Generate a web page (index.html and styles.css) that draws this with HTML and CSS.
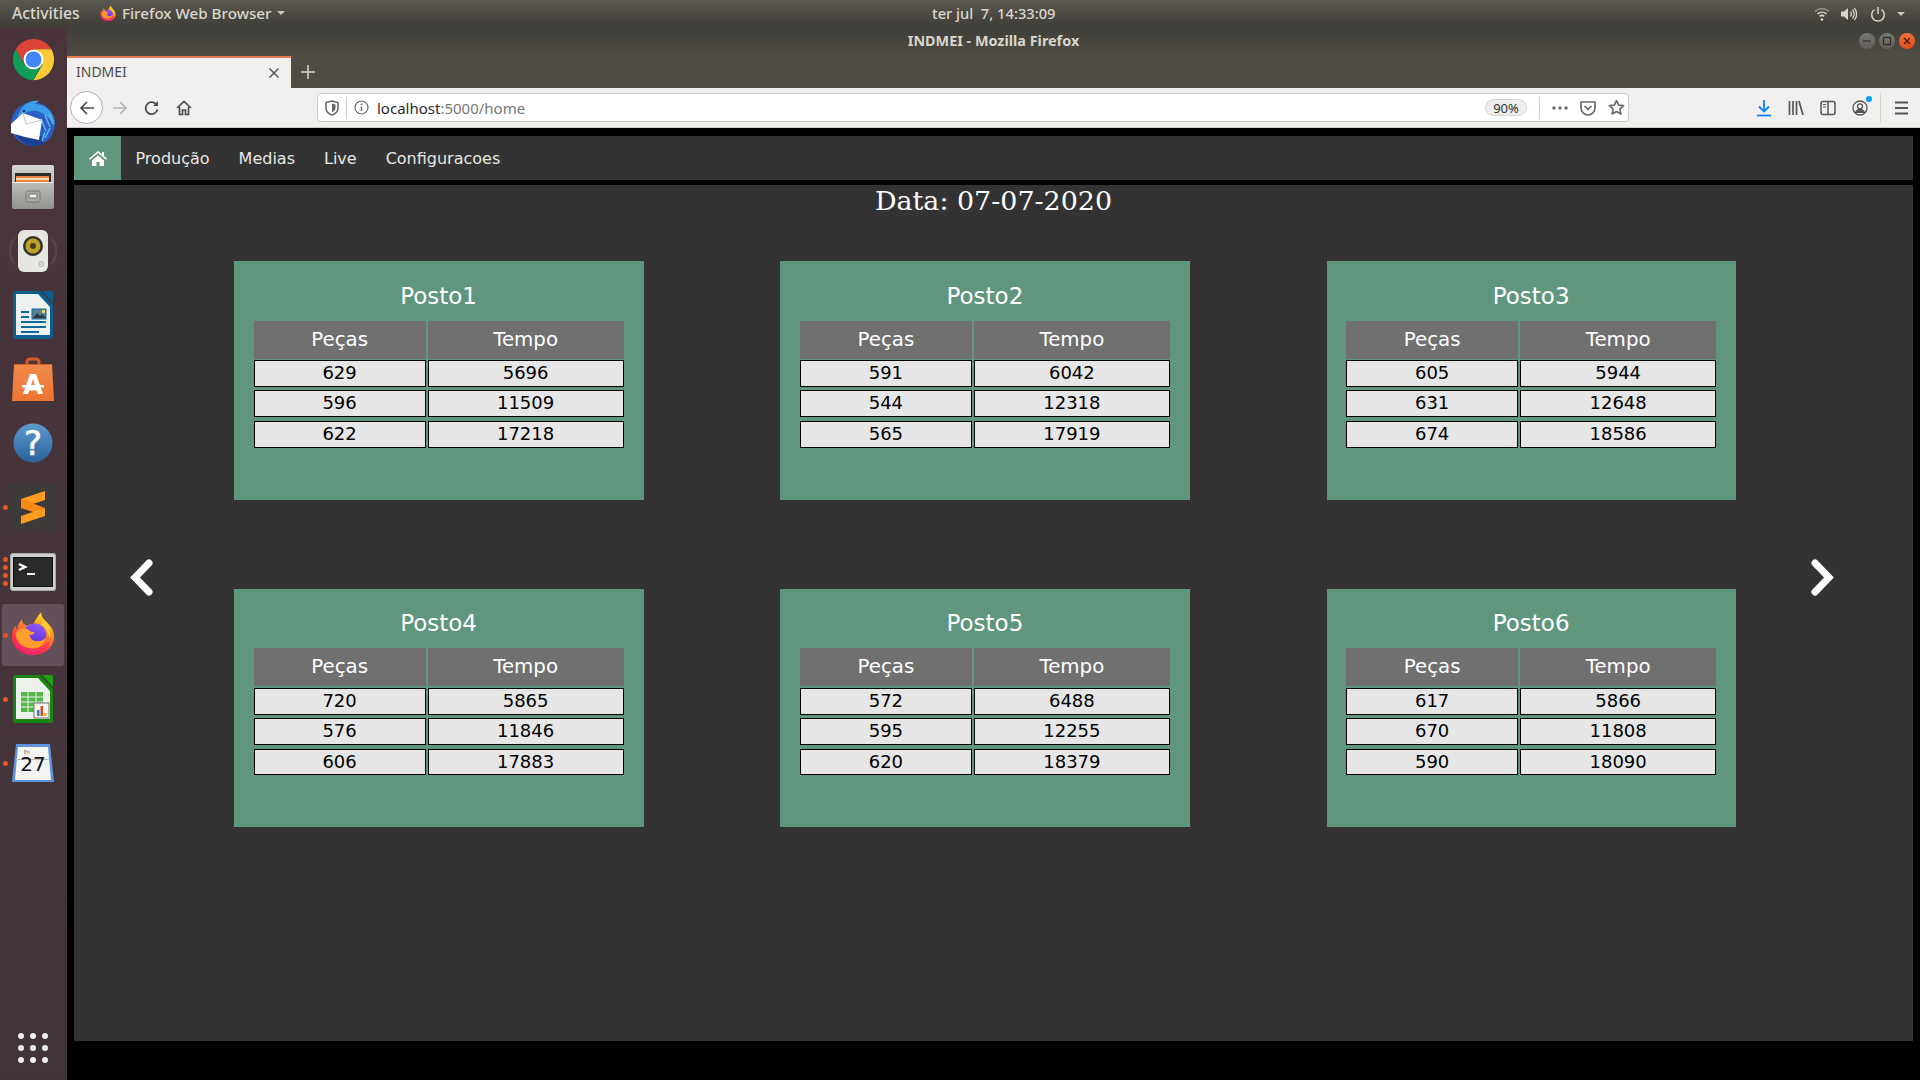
FILE: index.html
```html
<!DOCTYPE html>
<html lang="pt">
<head>
    <meta charset="UTF-8">
    <title>INDMEI - Mozilla Firefox</title>
    <link rel="stylesheet" href="styles.css">
</head>
<body>

<svg class="defs" width="0" height="0">
    <defs>
        <linearGradient id="ffBody" x1="0.8" y1="0" x2="0.3" y2="1">
            <stop offset="0" stop-color="#ffe226"/>
            <stop offset="0.35" stop-color="#ff9a26"/>
            <stop offset="0.7" stop-color="#ff3d3d"/>
            <stop offset="1" stop-color="#f5156c"/>
        </linearGradient>
        <linearGradient id="ffGlobe" x1="0.7" y1="0" x2="0.3" y2="1">
            <stop offset="0" stop-color="#9059ff"/>
            <stop offset="1" stop-color="#5b2ccb"/>
        </linearGradient>
        <linearGradient id="helpBlue" x1="0" y1="0" x2="0" y2="1">
            <stop offset="0" stop-color="#5d9bd0"/>
            <stop offset="1" stop-color="#2a6199"/>
        </linearGradient>
        <linearGradient id="silver" x1="0" y1="0" x2="0" y2="1">
            <stop offset="0" stop-color="#d6d6d2"/>
            <stop offset="1" stop-color="#94948f"/>
        </linearGradient>
        <linearGradient id="bagOrange" x1="0" y1="0" x2="0" y2="1">
            <stop offset="0" stop-color="#f08a4b"/>
            <stop offset="1" stop-color="#ed7434"/>
        </linearGradient>
        <symbol id="firefox" viewBox="0 0 48 48">
            <path fill="url(#ffBody)" d="M33 0c0 6 4 9 8 13 4 4 6 9 6 14 0 11-10 20-23 20S1 38 1 27c0-4 1-9 4-12 0 2 1 3 2 4 0-4 2-8 5-11 0 4 2 5 5 7 2-1 5-1 7-1 2-5 5-9 9-14z"/>
            <circle cx="26" cy="25" r="12.5" fill="url(#ffGlobe)"/>
            <path fill="#ff9d2b" d="M5 23c3-5 9-6 14-4 1 2 3 3 7 3-1 2-3 3-6 3 1 4 4 7 9 7 4 0 7-2 9-4-1 7-7 12-14 12C12 40 5 32 5 23z"/>
            <path fill="#f5326c" opacity="0.75" d="M7 32c3 6 10 9 17 9 8 0 14-4 18-10-1 9-10 15-18 15-8 0-15-6-17-14z"/>
            <path fill="#ffcb2e" d="M35 8c5 4 8 9 8 16 0 2 0 3-1 5-1-7-4-12-9-15 0-2 1-3 2-6z"/>
        </symbol>
    </defs>
</svg>

<div class="topbar">
    <div class="topbar-left">
        <span class="activities">Activities</span>
        <svg class="app-icon" width="16" height="17"><use href="#firefox"/></svg>
        <span class="app-name">Firefox Web Browser</span>
        <span class="caret"></span>
    </div>
    <span class="clock">ter jul&nbsp; 7, 14:33:09</span>
    <div class="tray">
        <svg class="tray-wifi" width="16" height="16" viewBox="0 0 16 16" fill="none" stroke="#d8d5cc" stroke-width="1.6">
            <path d="M1 5.5c4-3.6 10-3.6 14 0" opacity="0.55"/>
            <path d="M3.4 8c2.7-2.3 6.5-2.3 9.2 0"/>
            <path d="M5.7 10.3c1.4-1.1 3.2-1.1 4.6 0"/>
            <circle cx="8" cy="13.5" r="1.3" fill="#d8d5cc" stroke="none"/>
        </svg>
        <svg class="tray-vol" width="17" height="16" viewBox="0 0 17 16" fill="none" stroke="#d8d5cc" stroke-width="1.3">
            <path d="M1 5.5h3L8 2v12l-4-3.500H1z" fill="#d8d5cc" stroke="none"/>
            <path d="M10.5 5.5c1 1.5 1 3.5 0 5M12.5 3.5c2 2.700 2 6.300 0 9M14.500 2c2.600 3.700 2.600 8.300 0 12"/>
        </svg>
        <svg class="tray-power" width="16" height="16" viewBox="0 0 16 16" fill="none" stroke="#d8d5cc" stroke-width="1.5">
            <path d="M4.5 3.500a6.300 6.300 0 1 0 7 0"/>
            <path d="M8 1v7"/>
        </svg>
        <span class="caret"></span>
    </div>
</div>

<div class="desktop">
    <div class="dock">
        <div class="dock-item">
            <svg width="45" height="45" viewBox="0 0 48 48">
                <path fill="#db4437" d="M24 24l-9.500 5.500L5 13a22 22 0 0 1 38 0H24z"/>
                <path fill="#fcc934" d="M24 24V13h19a22 22 0 0 1-19 33l9.500-16.500z"/>
                <path fill="#0f9d58" d="M24 24l9.500 5.500L24 46A22 22 0 0 1 5 13l9.500 16.500z"/>
                <circle cx="24" cy="24" r="10.5" fill="#fff"/>
                <circle cx="24" cy="24" r="8.5" fill="#4285f4"/>
            </svg>
        </div>
        <div class="dock-item">
            <svg width="48" height="48" viewBox="0 0 48 48">
                <circle cx="24" cy="25" r="22" fill="#2a5fc4"/>
                <path fill="#1c3f96" d="M6 34c4 8 11 13 20 13 3 0 6-1 9-2l-3-8-16 1z"/>
                <path fill="#3b9de6" d="M8 20C10 8 20 0 30 2c-2 1-3 2-4 3 8 0 15 5 18 12 1 3 2 6 1 10-3-7-9-13-17-15-8-1-14 2-20 8z"/>
                <g stroke="#5cb6ee" stroke-width="1.5" fill="none">
                    <path d="M36 16l5 12M40 15l4 10M32 20l5 12M36 33l-3 9M41 29l-5 10"/>
                </g>
                <circle cx="15" cy="12" r="1.3" fill="#123a7a"/>
                <path fill="#fff" d="M2 25l12-11 19 7-3 20-14-3-14-4z"/>
                <path fill="none" stroke="#b9c2d0" stroke-width="1" d="M14 14l3 11 16-4"/>
            </svg>
        </div>
        <div class="dock-item">
            <svg width="42" height="44" viewBox="0 0 42 44">
                <rect x="0" y="0" width="42" height="44" rx="2" fill="url(#silver)"/>
                <rect x="3" y="8" width="36" height="10" fill="#2e2b28"/>
                <rect x="4" y="11" width="33" height="7" fill="#e8873f"/>
                <rect x="4" y="13" width="33" height="2" fill="#f5d9b3"/>
                <rect x="1" y="17" width="40" height="1" fill="#f2f2ee"/>
                <rect x="14" y="26" width="14" height="11" rx="1.5" fill="#a9a9a5" stroke="#77776f"/>
                <rect x="17" y="29" width="8" height="4" rx="1" fill="#f2f2ee" stroke="#55554f" stroke-width="0.8"/>
            </svg>
        </div>
        <div class="dock-item">
            <svg width="48" height="44" viewBox="0 0 48 44">
                <g fill="none" stroke="#65798e" stroke-width="1" opacity="0.35">
                    <path d="M7 8C0 15 0 29 7 36M41 8c7 7 7 21 0 28"/>
                    <path d="M4 10c-5 8-5 16 0 24M44 10c5 8 5 16 0 24"/>
                </g>
                <rect x="9" y="1" width="30" height="42" rx="6" fill="#e6e6e0"/>
                <circle cx="24" cy="17" r="10" fill="#33332d"/>
                <circle cx="24" cy="17" r="7.5" fill="#bfa324"/>
                <circle cx="24" cy="17" r="3" fill="#403c1c"/>
                <circle cx="32" cy="35" r="4.5" fill="#d0d0ca" stroke="#fff"/>
            </svg>
        </div>
        <div class="dock-item">
            <svg width="40" height="48" viewBox="0 0 40 48">
                <path fill="#0b5f8e" d="M3 0h24l13 14v31a3 3 0 0 1-3 3H3a3 3 0 0 1-3-3V3a3 3 0 0 1 3-3z"/>
                <path fill="#0b5f8e" d="M29 0h9a2 2 0 0 1 2 2v10z"/>
                <path fill="#edf1f2" d="M3 3h22l12 13v28H3z"/>
                <g fill="#0f6a9c">
                    <rect x="8" y="20" width="8" height="2"/>
                    <rect x="8" y="25" width="8" height="2"/>
                    <rect x="8" y="30" width="25" height="2"/>
                    <rect x="8" y="35" width="25" height="2"/>
                    <rect x="8" y="40" width="18" height="2"/>
                </g>
                <rect x="19" y="18" width="14" height="10" fill="#58808f" stroke="#0f6a9c"/>
                <path fill="#2d3b40" d="M20 27l4-5 3 3 2-2 4 4z"/>
                <rect x="29" y="19" width="3" height="3" fill="#f4d14f"/>
            </svg>
        </div>
        <div class="dock-item">
            <svg width="42" height="44" viewBox="0 0 42 44">
                <path d="M15 10V5a3 3 0 0 1 3-3h6a3 3 0 0 1 3 3v5" fill="none" stroke="#d65a22" stroke-width="3"/>
                <path fill="url(#bagOrange)" d="M2 7h38l2 37H0z"/>
                <path fill="#df5f20" d="M2 7h38v1H2z"/>
                <text class="bag-letter" x="21" y="37" text-anchor="middle">A</text>
                <rect x="10" y="28" width="22" height="2.5" fill="#fff"/>
            </svg>
        </div>
        <div class="dock-item">
            <svg width="40" height="40" viewBox="0 0 40 40">
                <circle cx="20" cy="20" r="19.5" fill="url(#helpBlue)"/>
                <text class="help-mark" x="20" y="32" text-anchor="middle">?</text>
            </svg>
        </div>
        <div class="dock-item">
            <div class="dots"><i></i></div>
            <svg width="48" height="48" viewBox="0 0 48 48">
                <rect width="48" height="48" rx="5" fill="#3c3b3a"/>
                <path fill="#ff9b21" d="M36 8v9L12 25v-9z"/>
                <path fill="#f68a13" d="M12 16l24 9v8L12 25z"/>
                <path fill="#ff9b21" d="M36 25v8l-24 8v-8z"/>
            </svg>
        </div>
        <div class="dock-item dock-terminal">
            <div class="dots"><i></i><i></i><i></i><i></i></div>
            <svg width="46" height="38" viewBox="0 0 46 38">
                <rect x="0.5" y="0.5" width="45" height="37" rx="2" fill="#cfcfcb" stroke="#a8a8a4"/>
                <rect x="3.5" y="4.5" width="39" height="29" fill="#2a2a2a" stroke="#111"/>
                <polyline points="9,11 15,14 9,17" fill="none" stroke="#fff" stroke-width="2.5"/>
                <rect x="17" y="20" width="8" height="2" fill="#eee"/>
            </svg>
        </div>
        <div class="dock-item is-active">
            <div class="dots"><i></i></div>
            <svg width="44" height="46"><use href="#firefox"/></svg>
        </div>
        <div class="dock-item">
            <div class="dots"><i></i></div>
            <svg width="40" height="48" viewBox="0 0 40 48">
                <path fill="#18850f" d="M3 0h24l13 14v31a3 3 0 0 1-3 3H3a3 3 0 0 1-3-3V3a3 3 0 0 1 3-3z"/>
                <path fill="#18a30f" d="M29 0h9a2 2 0 0 1 2 2v10z"/>
                <path fill="#edf1ec" d="M3 3h22l12 13v28H3z"/>
                <g fill="#54b848">
                    <rect x="8" y="17" width="22" height="20"/>
                </g>
                <g stroke="#edf1ec" stroke-width="1">
                    <path d="M8 22h22M8 27h22M8 32h22M15 17v20M23 17v20"/>
                </g>
                <rect x="21" y="28" width="15" height="15" fill="#f4f4f0" stroke="#777"/>
                <rect x="24" y="35" width="2.5" height="6" fill="#2f7fc9"/>
                <rect x="27.5" y="31" width="2.5" height="10" fill="#dd4b23"/>
                <rect x="31" y="38" width="2.5" height="3" fill="#e9b72d"/>
            </svg>
        </div>
        <div class="dock-item">
            <div class="dots"><i></i></div>
            <svg width="42" height="38" viewBox="0 0 42 38">
                <path fill="#5f93e0" d="M4 0h34l4 38H0z"/>
                <path fill="#f4f4f2" d="M6 3h30l3 33H3z"/>
                <rect x="4" y="15" width="34" height="1" fill="#bbb"/>
                <text class="cal-small" x="12" y="10">Fri</text>
                <text class="cal-day" x="21" y="27" text-anchor="middle">27</text>
            </svg>
        </div>
        <div class="dock-item dock-apps">
            <div class="apps-grid">
                <i></i><i></i><i></i><i></i><i></i><i></i><i></i><i></i><i></i>
            </div>
        </div>
    </div>

    <div class="window">
        <div class="titlebar">
            <span class="window-title">INDMEI - Mozilla Firefox</span>
            <div class="window-btns">
                <span class="win-btn">
                    <svg width="10" height="10" viewBox="0 0 10 10"><path d="M1 5h8" stroke="#2e2d2a" stroke-width="1.2"/></svg>
                </span>
                <span class="win-btn">
                    <svg width="10" height="10" viewBox="0 0 10 10"><rect x="1.5" y="1.5" width="7" height="7" fill="none" stroke="#2e2d2a" stroke-width="1.2"/></svg>
                </span>
                <span class="win-btn win-close">
                    <svg width="10" height="10" viewBox="0 0 10 10"><path d="M2 2l6 6M8 2l-6 6" stroke="#3a1a0c" stroke-width="1.2"/></svg>
                </span>
            </div>
        </div>

        <div class="tabstrip">
            <div class="browser-tab">
                <span class="tab-title">INDMEI</span>
                <svg width="12" height="12" viewBox="0 0 12 12"><path d="M1.5 1.5l9 9M10.5 1.5l-9 9" stroke="#555" stroke-width="1.5"/></svg>
            </div>
            <svg class="new-tab" width="14" height="14" viewBox="0 0 14 14"><path d="M7 0v14M0 7h14" stroke="#d8d5cc" stroke-width="1.5"/></svg>
        </div>

        <div class="toolbar">
            <span class="back-btn">
                <svg width="16" height="16" viewBox="0 0 16 16" fill="none" stroke="#4d4d4d" stroke-width="1.7"><path d="M15 8H2M8 2L2 8l6 6"/></svg>
            </span>
            <svg class="tool-forward" width="16" height="16" viewBox="0 0 16 16" fill="none" stroke="#b5b5b5" stroke-width="1.7"><path d="M1 8h13M8 2l6 6-6 6"/></svg>
            <svg class="tool-reload" width="16" height="16" viewBox="0 0 16 16" fill="none" stroke="#4d4d4d" stroke-width="1.8"><path d="M13.5 9.5A6 6 0 1 1 12 4"/><path d="M14 1v5H9" fill="#4d4d4d" stroke="none"/></svg>
            <svg class="tool-home" width="16" height="16" viewBox="0 0 16 16" fill="none" stroke="#4d4d4d" stroke-width="1.7"><path d="M1 8l7-6.500L15 8"/><path d="M3.500 7v7.500h3V10h3v4.500h3V7"/></svg>

            <div class="urlbar">
                <svg class="url-shield" width="14" height="16" viewBox="0 0 14 16" fill="none" stroke="#6a6a6a" stroke-width="1.5"><path d="M1 2.500L7 1l6 1.500V8c0 3.500-3 6-6 7-3-1-6-3.500-6-7z"/><path d="M7 3.500l3.500 1V8c0 2-1.500 3.500-3.500 4.300z" fill="#6a6a6a" stroke="none"/></svg>
                <span class="url-sep"></span>
                <svg class="url-info" width="15" height="15" viewBox="0 0 15 15" fill="none" stroke="#6a6a6a" stroke-width="1.2"><circle cx="7.5" cy="7.5" r="6.5"/><path d="M7.5 6.500v4.500" stroke-width="1.5"/><circle cx="7.5" cy="4.3" r="0.9" fill="#6a6a6a" stroke="none"/></svg>
                <span class="url-text">localhost<span class="url-dim">:5000/home</span></span>
                <span class="zoom-pill">90%</span>
                <span class="url-sep url-sep-right"></span>
                <svg class="url-dots" width="16" height="4" viewBox="0 0 16 4" fill="#6a6a6a"><circle cx="2" cy="2" r="1.7"/><circle cx="8" cy="2" r="1.7"/><circle cx="14" cy="2" r="1.7"/></svg>
                <svg class="url-pocket" width="16" height="16" viewBox="0 0 16 16" fill="none" stroke="#6a6a6a" stroke-width="1.7"><path d="M1 2h14v6a7 7 0 0 1-14 0z"/><path d="M4.500 6l3.500 3.500L11.500 6"/></svg>
                <svg class="url-star" width="17" height="17" viewBox="0 0 17 17" fill="none" stroke="#6a6a6a" stroke-width="1.7" stroke-linejoin="round"><path d="M8.500 1.500l2.100 4.600 5 .6-3.700 3.400 1 5-4.400-2.500-4.400 2.500 1-5L1.400 6.700l5-.6z"/></svg>
            </div>

            <div class="tool-right">
                <svg class="t-download" width="14" height="18" viewBox="0 0 14 18" fill="none" stroke="#0a84ff" stroke-width="1.8"><path d="M7 1v11M2 7.500L7 12.500l5-5"/><path d="M0 16.500h14"/></svg>
                <svg class="t-library" width="16" height="16" viewBox="0 0 16 16" fill="none" stroke="#555" stroke-width="1.7"><path d="M1.500 1v14M5 1v14M8.500 1v14M11 1l4 14"/></svg>
                <svg class="t-sidebar" width="16" height="16" viewBox="0 0 16 16" fill="none" stroke="#555" stroke-width="1.5"><rect x="1" y="1.5" width="14" height="13" rx="2"/><path d="M8 1.500v13" stroke-width="1.5"/><path d="M3 4.500h3M3 7h3" stroke-width="1"/></svg>
                <span class="t-account">
                    <svg width="16" height="16" viewBox="0 0 16 16" fill="none" stroke="#555" stroke-width="1.3"><circle cx="8" cy="8" r="7"/><circle cx="8" cy="6.3" r="2.5"/><path d="M3.500 13c.8-2.500 2.500-3.500 4.500-3.500s3.700 1 4.500 3.500" fill="#555"/></svg>
                    <i class="account-dot"></i>
                </span>
                <span class="tool-sep"></span>
                <svg class="t-menu" width="13" height="14" viewBox="0 0 13 14" stroke="#555" stroke-width="1.8"><path d="M0 1.500h13M0 7h13M0 12.500h13"/></svg>
            </div>
        </div>

        <div class="page">
            <nav class="navbar">
                <a class="nav-home">
                    <svg width="18" height="15" viewBox="0 0 18 15" fill="#fff"><path d="M9 0L0 7.500l1 1.200L9 2l8 6.700 1-1.200-3-2.500V1h-2v2.300z"/><path d="M3 9.500L9 4.300l6 5.200V15h-4.500v-4h-3v4H3z"/></svg>
                </a>
                <a class="nav-link">Produção</a>
                <a class="nav-link">Medias</a>
                <a class="nav-link">Live</a>
                <a class="nav-link">Configuracoes</a>
            </nav>

            <main class="main">
                <div class="date">Data: 07-07-2020</div>
                <div class="carousel">
                    <div class="arrow arrow-prev">
                        <svg width="23" height="37" viewBox="0 0 23 37" fill="none" stroke="#fff" stroke-width="7" stroke-linecap="round"><path d="M19 4L5 18.500 19 33"/></svg>
                    </div>
                    <div class="cards">
                        <section class="card">
                            <h2 class="card-title">Posto1</h2>
                            <div class="row row-head"><div>Peças</div><div>Tempo</div></div>
                            <div class="row row-data"><div>629</div><div>5696</div></div>
                            <div class="row row-data"><div>596</div><div>11509</div></div>
                            <div class="row row-data"><div>622</div><div>17218</div></div>
                        </section>
                        <section class="card">
                            <h2 class="card-title">Posto2</h2>
                            <div class="row row-head"><div>Peças</div><div>Tempo</div></div>
                            <div class="row row-data"><div>591</div><div>6042</div></div>
                            <div class="row row-data"><div>544</div><div>12318</div></div>
                            <div class="row row-data"><div>565</div><div>17919</div></div>
                        </section>
                        <section class="card">
                            <h2 class="card-title">Posto3</h2>
                            <div class="row row-head"><div>Peças</div><div>Tempo</div></div>
                            <div class="row row-data"><div>605</div><div>5944</div></div>
                            <div class="row row-data"><div>631</div><div>12648</div></div>
                            <div class="row row-data"><div>674</div><div>18586</div></div>
                        </section>
                        <section class="card">
                            <h2 class="card-title">Posto4</h2>
                            <div class="row row-head"><div>Peças</div><div>Tempo</div></div>
                            <div class="row row-data"><div>720</div><div>5865</div></div>
                            <div class="row row-data"><div>576</div><div>11846</div></div>
                            <div class="row row-data"><div>606</div><div>17883</div></div>
                        </section>
                        <section class="card">
                            <h2 class="card-title">Posto5</h2>
                            <div class="row row-head"><div>Peças</div><div>Tempo</div></div>
                            <div class="row row-data"><div>572</div><div>6488</div></div>
                            <div class="row row-data"><div>595</div><div>12255</div></div>
                            <div class="row row-data"><div>620</div><div>18379</div></div>
                        </section>
                        <section class="card">
                            <h2 class="card-title">Posto6</h2>
                            <div class="row row-head"><div>Peças</div><div>Tempo</div></div>
                            <div class="row row-data"><div>617</div><div>5866</div></div>
                            <div class="row row-data"><div>670</div><div>11808</div></div>
                            <div class="row row-data"><div>590</div><div>18090</div></div>
                        </section>
                    </div>
                    <div class="arrow arrow-next">
                        <svg width="23" height="37" viewBox="0 0 23 37" fill="none" stroke="#fff" stroke-width="7" stroke-linecap="round"><path d="M4 4l14 14.500L4 33"/></svg>
                    </div>
                </div>
            </main>
        </div>
    </div>
</div>

</body>
</html>
```

FILE: styles.css
```css
* {
    box-sizing: border-box;
}
html, body {
    margin: 0;
    height: 100%;
}
body {
    width: 1920px;
    height: 1080px;
    overflow: hidden;
    display: flex;
    flex-direction: column;
    background-color: #000;
    font-family: "DejaVu Sans", sans-serif;
}
.defs {
    position: absolute;
}

/* ubuntu top bar */
.topbar {
    height: 27px;
    flex: none;
    display: flex;
    align-items: center;
    padding-right: 15px;
    background: linear-gradient(#5b5850, #3f3d38);
    color: #d9d6cc;
    font-family: "Noto Sans", sans-serif;
    font-size: 15.2px;
    font-weight: 500;
}
.topbar-left {
    width: 932px;
    display: flex;
    align-items: center;
    padding-left: 12px;
    padding-bottom: 2px;
}
.activities {
    width: 88px;
    font-size: 15.7px;
}
.app-icon {
    margin-top: 2px;
    margin-right: 6px;
}
.app-name {
    width: 155px;
}
.caret {
    width: 0;
    height: 0;
    border-left: 4px solid transparent;
    border-right: 4px solid transparent;
    border-top: 4px solid #c9c6bc;
}
.clock {
    padding-bottom: 2px;
    font-size: 14.7px;
}
.tray {
    margin-left: auto;
    display: flex;
    align-items: center;
}
.tray-vol {
    margin-left: 10px;
}
.tray-power {
    margin-left: 13px;
}
.tray .caret {
    margin-left: 11px;
}

.desktop {
    flex: 1;
    display: flex;
    min-height: 0;
}

/* dock */
.dock {
    width: 67px;
    flex: none;
    display: flex;
    flex-direction: column;
    background: linear-gradient(#4a343b, #41353a);
}
.dock-item {
    position: relative;
    height: 64px;
    flex: none;
    display: flex;
    align-items: center;
    justify-content: center;
    padding-right: 1px;
}
.dock-item.is-active::before {
    content: "";
    position: absolute;
    left: 2px;
    right: 3px;
    top: 1px;
    bottom: 1px;
    border-radius: 3px;
    background-color: #63505a;
}
.dock-item svg {
    position: relative;
}
.dock-terminal svg {
    top: 1px;
}
.is-active svg {
    top: -1px;
}
.dots {
    position: absolute;
    left: 3px;
    top: 0;
    bottom: 0;
    display: flex;
    flex-direction: column;
    justify-content: center;
    gap: 3px;
}
.dots i {
    display: block;
    width: 5px;
    height: 5px;
    border-radius: 50%;
    background-color: #e95420;
}
.dock-apps {
    margin-top: auto;
}
.apps-grid {
    display: grid;
    grid-template-columns: repeat(3, 6px);
    gap: 6px;
}
.apps-grid i {
    width: 6px;
    height: 6px;
    border-radius: 50%;
    background-color: #eee;
}
.bag-letter {
    font-family: "DejaVu Sans", sans-serif;
    font-size: 26px;
    font-weight: 700;
    fill: #fff;
}
.help-mark {
    font-family: "DejaVu Sans", sans-serif;
    font-size: 34px;
    fill: #fff;
    stroke: #fff;
    stroke-width: 0.6px;
}
.cal-small {
    font-family: "DejaVu Sans", sans-serif;
    font-size: 5px;
    fill: #555;
}
.cal-day {
    font-family: "DejaVu Sans", sans-serif;
    font-size: 20px;
    fill: #111;
}

/* browser window */
.window {
    flex: 1;
    min-width: 0;
    display: flex;
    flex-direction: column;
}
.titlebar {
    height: 29px;
    flex: none;
    position: relative;
    display: flex;
    align-items: center;
    justify-content: center;
    padding-bottom: 2px;
    background: linear-gradient(#3f3d38, #504d46);
}
.window-title {
    color: #d9d6cc;
    font-family: "Noto Sans", sans-serif;
    font-size: 14.4px;
    font-weight: 700;
}
.window-btns {
    position: absolute;
    right: 5px;
    top: 6px;
    display: flex;
    gap: 4px;
}
.win-btn {
    width: 16px;
    height: 16px;
    border-radius: 50%;
    display: flex;
    align-items: center;
    justify-content: center;
    background: linear-gradient(#7a7872, #5f5d58);
}
.win-close {
    background: linear-gradient(#f2703a, #df4f1a);
}

.tabstrip {
    height: 32px;
    flex: none;
    display: flex;
    align-items: center;
    background-color: #504d46;
}
.browser-tab {
    width: 224px;
    height: 32px;
    display: flex;
    align-items: center;
    justify-content: space-between;
    padding: 0 11px 0 9px;
    background-color: #f2f0ee;
    border-top: 2px solid #ea7850;
    font-family: "Noto Sans", sans-serif;
    font-size: 14px;
    color: #4a4a4a;
}
.tab-title {
    margin-top: -3px;
}
.new-tab {
    margin-left: 10px;
}

.toolbar {
    height: 40px;
    flex: none;
    display: flex;
    align-items: center;
    padding-left: 3px;
    background-color: #f2f0ee;
    border-bottom: 1px solid #cfcdca;
}
.back-btn {
    width: 33px;
    height: 33px;
    display: flex;
    align-items: center;
    justify-content: center;
    border-radius: 50%;
    border: 1px solid #b1afac;
    background-color: #fff;
}
.tool-forward {
    margin-left: 9px;
}
.tool-reload {
    margin-left: 16px;
}
.tool-home {
    margin-left: 16px;
}
.urlbar {
    width: 1312px;
    height: 29px;
    margin-left: 125px;
    display: flex;
    align-items: center;
    padding-left: 7px;
    background-color: #fff;
    border: 1px solid #c9c7c3;
    border-radius: 4px;
    font-family: "Noto Sans", sans-serif;
    font-size: 15px;
}
.url-sep {
    width: 1px;
    height: 22px;
    margin-left: 7px;
    background-color: #cfcdca;
}
.url-info {
    margin-left: 7px;
}
.url-text {
    margin-left: 8px;
    color: #2b2b2b;
}
.url-dim {
    color: #777;
}
.zoom-pill {
    margin-left: auto;
    width: 42px;
    height: 17px;
    display: flex;
    align-items: center;
    justify-content: center;
    border: 1px solid #d4d2cf;
    border-radius: 9px;
    background-color: #efeeec;
    font-size: 13px;
    color: #333;
}
.url-sep-right {
    margin-left: 12px;
}
.url-dots {
    margin-left: 12px;
}
.url-pocket {
    margin-left: 12px;
}
.url-star {
    margin-left: 12px;
    margin-right: 3px;
}
.tool-right {
    flex: 1;
    display: flex;
    align-items: center;
    padding-left: 128px;
}
.t-library {
    margin-left: 17px;
}
.t-sidebar {
    margin-left: 16px;
}
.t-account {
    position: relative;
    margin-left: 16px;
    height: 16px;
}
.account-dot {
    position: absolute;
    top: -4px;
    right: -4px;
    width: 6px;
    height: 6px;
    border-radius: 50%;
    background-color: #0a9dff;
}
.tool-sep {
    width: 1px;
    height: 30px;
    margin-left: 12px;
    background-color: #d6d4d1;
}
.t-menu {
    margin-left: 14px;
}

/* app in the page */
.page {
    flex: 1;
    min-height: 0;
    display: flex;
    flex-direction: column;
    padding: 8px 7px 39px;
    background-color: #000;
}
.navbar {
    height: 44px;
    flex: none;
    display: flex;
    align-items: stretch;
    margin-bottom: 5px;
    background-color: #333;
}
.nav-home {
    width: 47px;
    display: flex;
    align-items: center;
    justify-content: center;
    background-color: #5f967d;
}
.nav-link {
    display: flex;
    align-items: center;
    padding: 0 14.5px;
    color: #e8e8e2;
    font-size: 16px;
}
.main {
    flex: 1;
    min-height: 0;
    background-color: #333;
}
.date {
    height: 76px;
    padding-top: 1px;
    text-align: center;
    color: #fff;
    font-family: "DejaVu Serif", serif;
    font-size: 26.9px;
    line-height: 30px;
}
.carousel {
    display: flex;
    align-items: center;
}
.arrow {
    display: flex;
}
.arrow-prev {
    flex: 0 0 160px;
    padding-left: 56px;
}
.arrow-next {
    flex: 1;
    padding-left: 75px;
}
.cards {
    display: grid;
    grid-template-columns: repeat(3, 409.6px);
    column-gap: 136.7px;
    row-gap: 89.2px;
    padding-bottom: 67px;
}
.card {
    height: 238.6px;
    padding: 0 20px 0 19.6px;
    background-color: #5f967d;
}
.card-title {
    height: 59.6px;
    margin: 0;
    padding-top: 19.6px;
    text-align: center;
    color: #fff;
    font-size: 23px;
    font-weight: 400;
    line-height: 30px;
}
.row {
    display: grid;
    grid-template-columns: 172px 1fr;
    column-gap: 2px;
    text-align: center;
}
.row-head {
    height: 37.2px;
    margin-bottom: 2.2px;
    color: #fff;
    font-size: 19.8px;
    line-height: 38px;
}
.row-head div {
    background-color: #707070;
}
.row-data {
    height: 26.8px;
    margin-bottom: 3.65px;
    color: #000;
    font-size: 18px;
    line-height: 24.3px;
}
.row-data div {
    background-color: #e6e6e6;
    border: 1px solid #000;
}
```
